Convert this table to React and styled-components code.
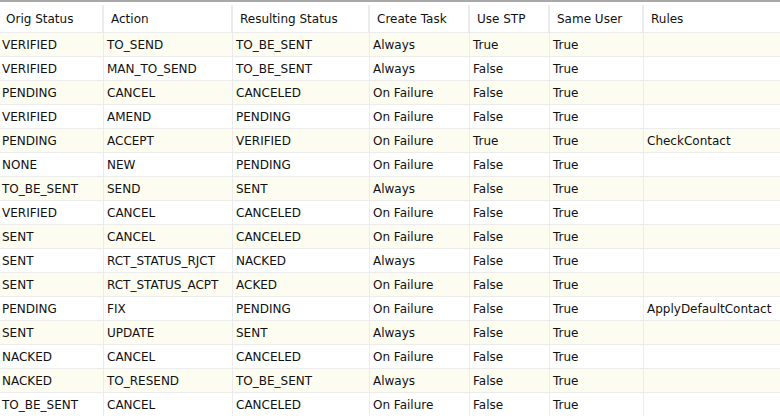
import styled, { createGlobalStyle } from "styled-components";

const GlobalStyle = createGlobalStyle`
  html, body {
    margin: 0;
    padding: 0;
    background: #fff;
  }
  body {
    font-family: "DejaVu Sans", Verdana, sans-serif;
    font-size: 12px;
    color: #111;
  }
`;

const columns = [
  { key: "orig", label: "Orig Status", width: 104 },
  { key: "action", label: "Action", width: 129 },
  { key: "result", label: "Resulting Status", width: 137 },
  { key: "task", label: "Create Task", width: 100 },
  { key: "stp", label: "Use STP", width: 80 },
  { key: "same", label: "Same User", width: 94 },
  { key: "rules", label: "Rules", width: 136 },
];

const rows = [
  ["VERIFIED", "TO_SEND", "TO_BE_SENT", "Always", "True", "True", ""],
  ["VERIFIED", "MAN_TO_SEND", "TO_BE_SENT", "Always", "False", "True", ""],
  ["PENDING", "CANCEL", "CANCELED", "On Failure", "False", "True", ""],
  ["VERIFIED", "AMEND", "PENDING", "On Failure", "False", "True", ""],
  ["PENDING", "ACCEPT", "VERIFIED", "On Failure", "True", "True", "CheckContact"],
  ["NONE", "NEW", "PENDING", "On Failure", "False", "True", ""],
  ["TO_BE_SENT", "SEND", "SENT", "Always", "False", "True", ""],
  ["VERIFIED", "CANCEL", "CANCELED", "On Failure", "False", "True", ""],
  ["SENT", "CANCEL", "CANCELED", "On Failure", "False", "True", ""],
  ["SENT", "RCT_STATUS_RJCT", "NACKED", "Always", "False", "True", ""],
  ["SENT", "RCT_STATUS_ACPT", "ACKED", "On Failure", "False", "True", ""],
  ["PENDING", "FIX", "PENDING", "On Failure", "False", "True", "ApplyDefaultContact"],
  ["SENT", "UPDATE", "SENT", "Always", "False", "True", ""],
  ["NACKED", "CANCEL", "CANCELED", "On Failure", "False", "True", ""],
  ["NACKED", "TO_RESEND", "TO_BE_SENT", "Always", "False", "True", ""],
  ["TO_BE_SENT", "CANCEL", "CANCELED", "On Failure", "False", "True", ""],
];

const template = columns.map((c) => `${c.width}px`).join(" ");

const Grid = styled.div`
  width: 780px;
  height: 418px;
  overflow: hidden;
  border-top: 2px solid #a8a8a8;
  box-sizing: border-box;
  background: #fff;
`;

const HeaderRow = styled.div`
  display: grid;
  grid-template-columns: ${template};
  height: 30px;
  align-items: stretch;
  background: #fff;
`;

const HeaderCell = styled.div`
  display: flex;
  align-items: center;
  padding: 0 0 0 7px;
  border-right: 2px solid #ececec;
  margin: 3px 0 0;
  white-space: nowrap;

  &:first-child {
    padding-left: 6px;
  }

  &:last-child {
    border-right: none;
  }
`;

const Row = styled.div`
  display: grid;
  grid-template-columns: ${template};
  height: 24px;
  background: ${(p) => (p.$alt ? "#fcfcf1" : "#fff")};
  border-top: 1px solid #ececec;
  box-sizing: border-box;
`;

const Cell = styled.div`
  display: flex;
  align-items: center;
  padding-left: 3px;
  border-right: 1px solid #ececec;
  white-space: nowrap;
  overflow: hidden;

  &:first-child {
    padding-left: 2px;
  }

  &:last-child {
    border-right: none;
  }
`;

export default function App() {
  return (
    <>
      <GlobalStyle />
      <Grid>
        <HeaderRow>
          {columns.map((c) => (
            <HeaderCell key={c.key}>{c.label}</HeaderCell>
          ))}
        </HeaderRow>
        {rows.map((r, i) => (
          <Row key={i} $alt={i % 2 === 0}>
            {r.map((v, j) => (
              <Cell key={j}>{v}</Cell>
            ))}
          </Row>
        ))}
      </Grid>
    </>
  );
}
